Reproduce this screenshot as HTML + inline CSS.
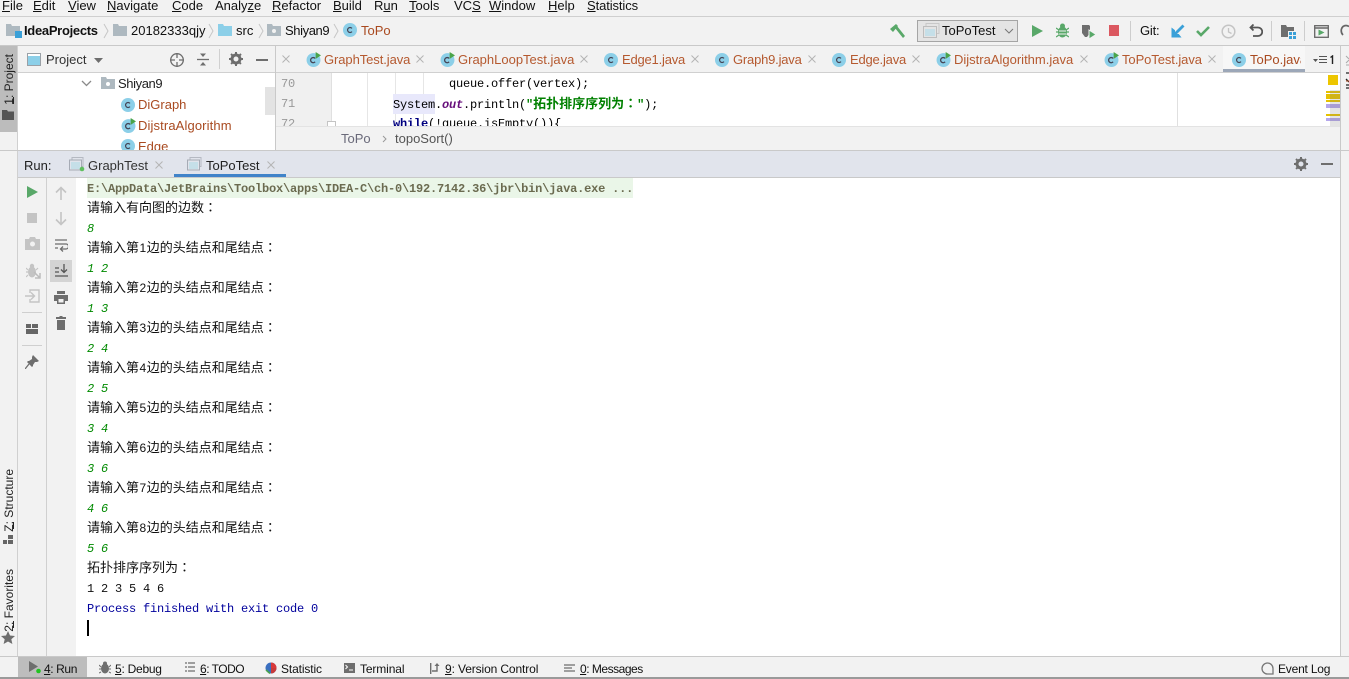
<!DOCTYPE html>
<html><head><meta charset="utf-8"><style>
html,body{margin:0;padding:0}
body{width:1349px;height:679px;overflow:hidden;position:relative;background:#f2f2f2;font-family:"Liberation Sans","Noto Sans CJK SC",sans-serif;font-size:13px;color:#111}
.a,.t,svg.i{position:absolute}
.a{display:block}
.t{white-space:nowrap;line-height:16px}
.o{color:#a94a20}
.tab{color:#b5592f}
.c{position:absolute;left:87px;white-space:nowrap;height:20px;line-height:20px;margin-top:-1px;font-family:"Noto Sans CJK SC",sans-serif;font-size:13px;color:#111}
.c b{font-family:"Liberation Sans",sans-serif;font-weight:normal;font-size:12px;padding:0 .5px}
em{font-style:normal;font-family:"Noto Sans CJK TC",sans-serif}
.g{position:absolute;left:87px;white-space:nowrap;height:20px;line-height:20px;margin-top:1px;font-family:"Liberation Mono",monospace;font-size:12px;letter-spacing:-.2px;font-style:italic;color:#008a00}
.m{font-family:"Liberation Mono","Noto Sans CJK SC",monospace;font-size:12px;letter-spacing:-.2px;line-height:20px;white-space:pre;position:absolute}
.k{margin-top:1px}
.b{font-size:12px;letter-spacing:-.12px}
.v{position:absolute;writing-mode:vertical-rl;transform:rotate(180deg);white-space:nowrap;font-size:12px;line-height:14px;color:#222}
</style></head><body>
<svg width="0" height="0" style="position:absolute"><defs>
<symbol id="ci" viewBox="0 0 14 14"><circle cx="7" cy="7" r="7" fill="#8ccfe8"/><path d="M9 5.400A2.500 2.500 0 1 0 9 8.600" fill="none" stroke="#445" stroke-width="1.200"/></symbol>
<symbol id="cr" viewBox="0 0 14 14"><circle cx="7" cy="7.500" r="6.500" fill="#8ccfe8"/><path d="M8.500 6A2.400 2.400 0 1 0 8.500 9.200" fill="none" stroke="#445" stroke-width="1.200"/><path d="M9 0l5 3.200-5 3.200z" fill="#4aa44a"/></symbol>
<symbol id="fo" viewBox="0 0 14 12"><path d="M0 0h5l1 2h8v10H0z" fill="#aeb9c0"/></symbol>
<symbol id="xx" viewBox="0 0 8 8"><path d="M.5 .5l7 7M7.500 .5l-7 7" stroke="#b4b4b4" stroke-width="1" fill="none"/></symbol>
</defs></svg>

<!-- menu -->
<div class="a" style="left:0;top:16px;width:1349px;height:1px;background:#cfcfcf"></div>
<div class="t" style="left:2px;top:-2px"><u>F</u>ile</div>
<div class="t" style="left:33px;top:-2px"><u>E</u>dit</div>
<div class="t" style="left:68px;top:-2px"><u>V</u>iew</div>
<div class="t" style="left:107px;top:-2px"><u>N</u>avigate</div>
<div class="t" style="left:172px;top:-2px"><u>C</u>ode</div>
<div class="t" style="left:215px;top:-2px">Analy<u>z</u>e</div>
<div class="t" style="left:272px;top:-2px"><u>R</u>efactor</div>
<div class="t" style="left:333px;top:-2px"><u>B</u>uild</div>
<div class="t" style="left:374px;top:-2px">R<u>u</u>n</div>
<div class="t" style="left:409px;top:-2px"><u>T</u>ools</div>
<div class="t" style="left:454px;top:-2px">VC<u>S</u></div>
<div class="t" style="left:489px;top:-2px"><u>W</u>indow</div>
<div class="t" style="left:548px;top:-2px"><u>H</u>elp</div>
<div class="t" style="left:587px;top:-2px;letter-spacing:-.1px"><u>S</u>tatistics</div>

<!-- nav -->
<div class="a" style="left:0;top:45px;width:1349px;height:1px;background:#c9c9c9"></div>
<svg class="i" style="left:6px;top:24px" width="17" height="14"><use href="#fo" width="14" height="12"/><rect x="9" y="7" width="7" height="7" fill="#3aa0d8"/></svg>
<div class="t" style="left:24px;top:23px;font-weight:bold;letter-spacing:-.3px">IdeaProjects</div>
<svg class="i" style="left:103px;top:23px" width="6" height="16"><path d="M1 1l4 7-4 7" fill="none" stroke="#c6c6c6"/></svg>
<svg class="i" style="left:113px;top:24px" width="14" height="12"><use href="#fo"/></svg>
<div class="t" style="left:131px;top:23px">20182333qjy</div>
<svg class="i" style="left:208px;top:23px" width="6" height="16"><path d="M1 1l4 7-4 7" fill="none" stroke="#c6c6c6"/></svg>
<svg class="i" style="left:218px;top:24px" width="14" height="12"><path d="M0 0h5l1 2h8v10H0z" fill="#8ccfe8"/></svg>
<div class="t" style="left:236px;top:23px">src</div>
<svg class="i" style="left:258px;top:23px" width="6" height="16"><path d="M1 1l4 7-4 7" fill="none" stroke="#c6c6c6"/></svg>
<svg class="i" style="left:267px;top:24px" width="14" height="12"><use href="#fo"/><circle cx="7" cy="7" r="2" fill="#f2f2f2"/></svg>
<div class="t" style="left:285px;top:23px;letter-spacing:-.4px">Shiyan9</div>
<svg class="i" style="left:333px;top:23px" width="6" height="16"><path d="M1 1l4 7-4 7" fill="none" stroke="#c6c6c6"/></svg>
<svg class="i" style="left:343px;top:23px" width="14" height="14"><use href="#ci"/></svg>
<div class="t o" style="left:361px;top:23px">ToPo</div>

<!-- toolbar -->
<svg class="i" style="left:889px;top:23px" width="17" height="15"><path d="M1 6L7 1l2 2-5 6zM6 5l2-2 8 10-2 2z" fill="#59a869"/></svg>
<div class="a" style="left:917px;top:20px;width:99px;height:20px;background:#e4e4e4;border:1px solid #a5a5a5"></div>
<svg class="i" style="left:923px;top:23px" width="17" height="15"><rect x="3" y="0.500" width="13" height="10" fill="none" stroke="#c8c8c8"/><rect x="0.500" y="3.500" width="13" height="11" fill="#e4e4e4" stroke="#bdbdbd"/><rect x="2" y="6" width="10" height="7" fill="#c5dfe8"/></svg>
<div class="t" style="left:942px;top:23px">ToPoTest</div>
<svg class="i" style="left:1004px;top:28px" width="10" height="6"><path d="M1 1l4 4 4-4" fill="none" stroke="#777"/></svg>
<svg class="i" style="left:1032px;top:25px" width="11" height="12"><path d="M0 0l11 6-11 6z" fill="#59a869"/></svg>
<svg class="i" style="left:1056px;top:23px" width="13" height="15"><ellipse cx="6.500" cy="9" rx="4.500" ry="5.500" fill="#59a869"/><circle cx="6.500" cy="3" r="2.500" fill="#59a869"/><path d="M0 5l3 2M13 5l-3 2M0 9h3M10 9h3M0 14l3-2M13 14l-3-2" stroke="#59a869" stroke-width="1.300"/><path d="M3 8h7M3 11h7" stroke="#f2f2f2"/></svg>
<svg class="i" style="left:1081px;top:24px" width="16" height="16"><path d="M1 1h7l1 1v7l-3 4H4L1 9z" fill="#6e6e6e"/><path d="M8 6l7 4.500-7 4.500z" fill="#59a869" stroke="#f2f2f2"/></svg>
<div class="a" style="left:1109px;top:25px;width:10px;height:11px;background:#db5860"></div>
<div class="a" style="left:1130px;top:21px;width:1px;height:20px;background:#cdcdcd"></div>
<div class="t" style="left:1140px;top:23px;letter-spacing:-.2px">Git:</div>
<svg class="i" style="left:1171px;top:24px" width="14" height="14"><path d="M12.500 1.500L4 10" fill="none" stroke="#3aa0d8" stroke-width="2.800"/><path d="M1 4.500V13h8.500l-2-2.500H3.500V6.500z" fill="#3aa0d8" stroke="#3aa0d8"/></svg>
<svg class="i" style="left:1196px;top:25px" width="15" height="12"><path d="M1 6l4 4 8-8" fill="none" stroke="#59a869" stroke-width="2.600"/></svg>
<svg class="i" style="left:1221px;top:24px" width="15" height="15"><circle cx="7.500" cy="7.500" r="6.300" fill="none" stroke="#c4c4c4" stroke-width="1.500"/><path d="M7.500 4v4l3 1.500" fill="none" stroke="#c4c4c4" stroke-width="1.300"/></svg>
<svg class="i" style="left:1249px;top:24px" width="14" height="14"><path d="M4.500 .5L1.500 3.500l3 3M1.500 3.500h7.500a3.800 3.800 0 0 1 0 8.500H4" fill="none" stroke="#555" stroke-width="1.800"/></svg>
<div class="a" style="left:1271px;top:21px;width:1px;height:20px;background:#cdcdcd"></div>
<svg class="i" style="left:1281px;top:25px" width="16" height="14"><path d="M0 0h5l1 2h7v10H0z" fill="#6e6e6e"/><path d="M7 6h9v8H7z" fill="#f2f2f2"/><path d="M8 7h3v3H8zM12 7h3v3h-3zM8 11h3v3H8zM12 11h3v3h-3z" fill="#3aa0d8"/></svg>
<div class="a" style="left:1304px;top:21px;width:1px;height:20px;background:#cdcdcd"></div>
<svg class="i" style="left:1314px;top:25px" width="15" height="13"><rect x=".7" y=".7" width="13.600" height="11.600" fill="none" stroke="#666" stroke-width="1.300"/><path d="M1 3h13" stroke="#666" stroke-width="1.500"/><path d="M4.500 4.500l6 3-6 3z" fill="#59a869"/></svg>
<svg class="i" style="left:1340px;top:24px" width="9" height="14"><path d="M9 2.500A5.500 5.500 0 0 0 3 2.500 6 6 0 0 0 3 11" fill="none" stroke="#666" stroke-width="1.700"/></svg>

<!-- left stripe -->
<div class="a" style="left:17px;top:46px;width:1px;height:610px;background:#d0d0d0"></div>
<div class="a" style="left:0;top:46px;width:17px;height:86px;background:#bcbcbc"></div>
<div class="v" style="left:2px;top:54px">1: Project</div>
<div class="a" style="left:13px;top:97px;width:1px;height:7px;background:#222"></div>
<svg class="i" style="left:2px;top:110px" width="12" height="10"><path d="M0 0h5l1 1.500h6V10H0z" fill="#555"/></svg>
<div class="v" style="left:2px;top:469px">Z: Structure</div>
<div class="a" style="left:13px;top:522px;width:1px;height:7px;background:#222"></div>
<svg class="i" style="left:3px;top:535px" width="10" height="10"><path d="M0 5h4v4H0zM5 0h5v4H5zM5 5h5v4H5z" fill="#666"/></svg>
<div class="v" style="left:2px;top:569px">2: Favorites</div>
<div class="a" style="left:13px;top:621px;width:1px;height:7px;background:#222"></div>
<svg class="i" style="left:1px;top:631px" width="14" height="13"><path d="M7 0l2 4.500 5 .5-3.700 3.200 1.100 4.800L7 10.500 2.600 13l1.100-4.800L0 5l5-.5z" fill="#6e6e6e"/></svg>

<!-- project panel -->
<div class="a" style="left:18px;top:72px;width:1322px;height:1px;background:#d0d0d0"></div>
<div class="a" style="left:275px;top:46px;width:1px;height:105px;background:#c9c9c9"></div>
<svg class="i" style="left:27px;top:53px" width="14" height="13"><rect x=".5" y=".5" width="13" height="12" fill="#fff" stroke="#9aa0a6"/><rect x="1" y="3" width="12" height="9" fill="#8ccfe8"/></svg>
<div class="t" style="left:46px;top:52px;color:#333">Project</div>
<svg class="i" style="left:94px;top:58px" width="9" height="6"><path d="M0 0h9L4.500 5z" fill="#6e6e6e"/></svg>
<svg class="i" style="left:169px;top:52px" width="16" height="16"><circle cx="8" cy="8" r="6.300" fill="none" stroke="#6e6e6e" stroke-width="1.300"/><path d="M8 1v5M8 10v5M1 8h5M10 8h5" stroke="#6e6e6e" stroke-width="1.300"/></svg>
<svg class="i" style="left:196px;top:52px" width="14" height="15"><path d="M1 7.500h12" stroke="#6e6e6e" stroke-width="1.300"/><path d="M4 1.500h6L7 5zM4 13.500h6L7 10z" fill="#6e6e6e"/></svg>
<div class="a" style="left:219px;top:49px;width:1px;height:20px;background:#d0d0d0"></div>
<svg class="i" style="left:229px;top:52px" width="14" height="14"><circle cx="7" cy="7" r="4" fill="none" stroke="#6e6e6e" stroke-width="3"/><path d="M7 0v14M0 7h14M2 2l10 10M12 2L2 12" stroke="#6e6e6e" stroke-width="2" stroke-dasharray="2.200 9.600 2.200"/></svg>
<div class="a" style="left:256px;top:59px;width:12px;height:2px;background:#6e6e6e"></div>

<div class="a" style="left:18px;top:73px;width:257px;height:78px;background:#fff;overflow:hidden">
<svg class="i" style="left:63px;top:7px" width="11" height="7"><path d="M1 1l4.500 4.500L10 1" fill="none" stroke="#8a8a8a" stroke-width="1.300"/></svg>
<svg class="i" style="left:83px;top:4px" width="14" height="12"><use href="#fo"/><circle cx="7" cy="7" r="2" fill="#fff"/></svg>
<div class="t" style="left:100px;top:3px;color:#222;letter-spacing:-.4px">Shiyan9</div>
<svg class="i" style="left:103px;top:25px" width="14" height="14"><use href="#ci"/></svg>
<div class="t o" style="left:120px;top:24px">DiGraph</div>
<svg class="i" style="left:103px;top:45px" width="15" height="15"><use href="#cr"/></svg>
<div class="t o" style="left:120px;top:45px;letter-spacing:.12px">DijstraAlgorithm</div>
<svg class="i" style="left:103px;top:66px" width="14" height="14"><use href="#ci"/></svg>
<div class="t o" style="left:120px;top:66px">Edge</div>
<div class="a" style="left:247px;top:14px;width:10px;height:28px;background:#e3e3e3"></div>
</div>

<!-- editor tabs -->
<svg class="i" style="left:282px;top:55px" width="8" height="8"><use href="#xx"/></svg>
<svg class="i" style="left:306px;top:52px" width="15" height="15"><use href="#cr"/></svg>
<div class="t tab" style="left:324px;top:52px;letter-spacing:-.08px">GraphTest.java</div><svg class="i" style="left:416px;top:55px" width="8" height="8"><use href="#xx"/></svg>
<svg class="i" style="left:440px;top:52px" width="15" height="15"><use href="#cr"/></svg>
<div class="t tab" style="left:458px;top:52px">GraphLoopTest.java</div><svg class="i" style="left:580px;top:55px" width="8" height="8"><use href="#xx"/></svg>
<svg class="i" style="left:604px;top:53px" width="14" height="14"><use href="#ci"/></svg>
<div class="t tab" style="left:622px;top:52px;letter-spacing:-.2px">Edge1.java</div><svg class="i" style="left:691px;top:55px" width="8" height="8"><use href="#xx"/></svg>
<svg class="i" style="left:715px;top:53px" width="14" height="14"><use href="#ci"/></svg>
<div class="t tab" style="left:733px;top:52px;letter-spacing:-.2px">Graph9.java</div><svg class="i" style="left:808px;top:55px" width="8" height="8"><use href="#xx"/></svg>
<svg class="i" style="left:832px;top:53px" width="14" height="14"><use href="#ci"/></svg>
<div class="t tab" style="left:850px;top:52px;letter-spacing:-.2px">Edge.java</div><svg class="i" style="left:912px;top:55px" width="8" height="8"><use href="#xx"/></svg>
<svg class="i" style="left:936px;top:52px" width="15" height="15"><use href="#cr"/></svg>
<div class="t tab" style="left:954px;top:52px">DijstraAlgorithm.java</div><svg class="i" style="left:1080px;top:55px" width="8" height="8"><use href="#xx"/></svg>
<svg class="i" style="left:1104px;top:52px" width="15" height="15"><use href="#cr"/></svg>
<div class="t tab" style="left:1122px;top:52px;letter-spacing:-.08px">ToPoTest.java</div><svg class="i" style="left:1208px;top:55px" width="8" height="8"><use href="#xx"/></svg>
<div class="a" style="left:1223px;top:46px;width:82px;height:26px;background:#f7f7f7"></div>
<div class="a" style="left:1223px;top:69px;width:82px;height:3px;background:#9ca7b8"></div>
<svg class="i" style="left:1232px;top:53px" width="14" height="14"><use href="#ci"/></svg>
<div class="t o" style="left:1250px;top:52px;width:51px;overflow:hidden">ToPo.java</div>
<svg class="i" style="left:1313px;top:55px" width="24" height="10"><path d="M0 4h5L2.500 7z" fill="#555"/><path d="M6 1.500h8M6 4.500h8M6 7.500h8" stroke="#555"/><path d="M17.500 2.500l2-1.500v8" fill="none" stroke="#222" stroke-width="1.400"/></svg>

<!-- editor -->
<div class="a" style="left:276px;top:73px;width:1065px;height:53px;background:#fff;overflow:hidden">
<div class="a" style="left:0;top:0;width:55px;height:53px;background:#f0f0f0"></div>
<div class="a" style="left:55px;top:0;width:1px;height:53px;background:#e0e0e0"></div>
<div class="a" style="left:91px;top:0;width:1px;height:53px;background:#e6e6e6"></div>
<div class="a" style="left:119px;top:0;width:1px;height:53px;background:#e6e6e6"></div>
<div class="a" style="left:147px;top:0;width:1px;height:53px;background:#e6e6e6"></div>
<div class="a" style="left:901px;top:0;width:1px;height:53px;background:#e0e0e0"></div>
<div class="m" style="left:5px;top:1px;color:#999">70</div>
<div class="m" style="left:5px;top:21px;color:#999">71</div>
<div class="m" style="left:5px;top:41px;color:#999">72</div>
<div class="a" style="left:51px;top:48px;width:7px;height:7px;background:#fff;border:1px solid #c4c4c4"></div>
<div class="m" style="left:173px;top:1px;color:#000">queue.offer(vertex);</div>
<div class="a" style="left:117px;top:21px;width:42px;height:20px;background:#e8e8fb"></div>
<div class="m" style="left:117px;top:22px;color:#000">System.<i style="color:#660e7a;font-weight:bold">out</i>.println(<b style="color:#008000">"</b><b style="color:#008000;font-size:13px;letter-spacing:0;font-family:'Noto Sans CJK SC',sans-serif;line-height:0">拓扑排序序列为<em>：</em></b><b style="color:#008000">"</b>);</div>
<div class="m" style="left:117px;top:41px;color:#000"><b style="color:#000080">while</b>(!queue.isEmpty()){</div>
</div>
<div class="a" style="left:276px;top:126px;width:1065px;height:1px;background:#e3e3e3"></div>
<div class="t" style="left:341px;top:131px;color:#6a6a7a">ToPo</div>
<svg class="i" style="left:382px;top:135px" width="5" height="8"><path d="M1 1l3 3-3 3" fill="none" stroke="#999"/></svg>
<div class="t" style="left:395px;top:131px;color:#555">topoSort()</div>

<!-- error stripe -->
<div class="a" style="left:1340px;top:46px;width:1px;height:105px;background:#c9c9c9"></div>
<div class="a" style="left:1328px;top:75px;width:10px;height:10px;background:#edc600"></div>
<div class="a" style="left:1326px;top:91px;width:14px;height:2px;background:#e6c200"></div>
<div class="a" style="left:1326px;top:94px;width:14px;height:5px;background:#e6c200"></div>
<div class="a" style="left:1326px;top:100px;width:14px;height:2px;background:#e6c200"></div>
<div class="a" style="left:1326px;top:104px;width:14px;height:4px;background:#b5a7ec"></div>
<div class="a" style="left:1326px;top:114px;width:14px;height:2px;background:#e6c200"></div>
<div class="a" style="left:1326px;top:118px;width:14px;height:3px;background:#b5a7ec"></div>
<div class="a" style="left:1330px;top:90px;width:10px;height:36px;background:rgba(120,120,120,.2)"></div>
<svg class="i" style="left:1345px;top:54px" width="4" height="38"><path d="M1 2l3 3M1 9l3-3M1 11h3" stroke="#aaa" fill="none"/><path d="M1 19h3M1 25l3 3M1 31h3M1 34h3" stroke="#222" stroke-width="1.300" fill="none"/><path d="M1 27h3" stroke="#a94a20"/></svg>

<!-- run header -->
<div class="a" style="left:0;top:150px;width:1349px;height:1px;background:#c9c9c9"></div>
<div class="a" style="left:18px;top:151px;width:1322px;height:26px;background:#e1e4ec"></div>
<div class="a" style="left:18px;top:177px;width:1322px;height:1px;background:#c9c9c9"></div>
<div class="a" style="left:1340px;top:151px;width:1px;height:505px;background:#c9c9c9"></div>
<div class="t" style="left:24px;top:158px;color:#222">Run:</div>
<svg class="i" style="left:69px;top:157px" width="16" height="15"><rect x="3" y=".5" width="11" height="9" fill="none" stroke="#b5b9c2"/><rect x=".5" y="3" width="12" height="10" fill="#e1e4ec" stroke="#a6abb5"/><rect x="2" y="5" width="9" height="7" fill="#c5dfe8"/><circle cx="13" cy="12" r="2.300" fill="#5fbf5f"/></svg>
<div class="t" style="left:88px;top:158px;color:#333">GraphTest</div>
<svg class="i" style="left:155px;top:161px" width="8" height="8"><use href="#xx"/></svg>
<div class="a" style="left:174px;top:174px;width:112px;height:3px;background:#4083c9"></div>
<svg class="i" style="left:187px;top:157px" width="15" height="15"><rect x="3" y=".5" width="11" height="9" fill="none" stroke="#b5b9c2"/><rect x=".5" y="3" width="12" height="10" fill="#e1e4ec" stroke="#a6abb5"/><rect x="2" y="5" width="9" height="7" fill="#c5dfe8"/></svg>
<div class="t" style="left:206px;top:158px;color:#222">ToPoTest</div>
<svg class="i" style="left:267px;top:161px" width="8" height="8"><use href="#xx"/></svg>
<svg class="i" style="left:1294px;top:157px" width="14" height="14"><circle cx="7" cy="7" r="4" fill="none" stroke="#6e6e6e" stroke-width="3"/><path d="M7 0v14M0 7h14M2 2l10 10M12 2L2 12" stroke="#6e6e6e" stroke-width="2" stroke-dasharray="2.200 9.600 2.200"/></svg>
<div class="a" style="left:1321px;top:163px;width:12px;height:2px;background:#6e6e6e"></div>

<!-- run tool columns -->
<div class="a" style="left:46px;top:178px;width:1px;height:478px;background:#d0d0d0"></div>
<div class="a" style="left:76px;top:178px;width:1264px;height:478px;background:#fff"></div>
<svg class="i" style="left:27px;top:186px" width="11" height="12"><path d="M0 0l11 6-11 6z" fill="#59a869"/></svg>
<div class="a" style="left:27px;top:213px;width:10px;height:10px;background:#c4c4c4"></div>
<svg class="i" style="left:25px;top:237px" width="15" height="13"><path d="M0 2h4l1-2h5l1 2h4v11H0z" fill="#c4c4c4"/><circle cx="7.500" cy="7" r="2.500" fill="#f2f2f2"/></svg>
<svg class="i" style="left:26px;top:263px" width="15" height="16"><ellipse cx="6" cy="9" rx="4" ry="5.500" fill="#c4c4c4"/><circle cx="6" cy="3" r="2.200" fill="#c4c4c4"/><path d="M0 5l2 2M12 5l-2 2M0 9h2M0 14l2-2" stroke="#c4c4c4" stroke-width="1.200"/><path d="M8 9l6 6M14 10v5H9" fill="none" stroke="#bcbcbc" stroke-width="1.500"/></svg>
<svg class="i" style="left:25px;top:289px" width="15" height="14"><path d="M5 4V1h9v12H5v-3" fill="none" stroke="#c4c4c4" stroke-width="1.400"/><path d="M0 7h9M6 3.500L9.500 7 6 10.500" fill="none" stroke="#c4c4c4" stroke-width="1.400"/></svg>
<div class="a" style="left:22px;top:312px;width:20px;height:1px;background:#cfcfcf"></div>
<svg class="i" style="left:26px;top:324px" width="12" height="10"><path d="M0 0h5v4H0zM6 0h6v4H6zM0 5h12v5H0z" fill="#666"/></svg>
<div class="a" style="left:22px;top:345px;width:20px;height:1px;background:#cfcfcf"></div>
<svg class="i" style="left:25px;top:355px" width="14" height="14"><path d="M8 0l6 6-2 1-2 0-2 3 0 1-1 1-5-5 1-1 1 0 3-2 0-2z" fill="#6e6e6e"/><path d="M4 9l-4 5" stroke="#6e6e6e" stroke-width="1.300"/></svg>

<svg class="i" style="left:55px;top:186px" width="12" height="14"><path d="M6 14V1.500M1 6.500l5-5 5 5" fill="none" stroke="#c4c4c4" stroke-width="1.600"/></svg>
<svg class="i" style="left:55px;top:212px" width="12" height="14"><path d="M6 0v12.500M1 7.500l5 5 5-5" fill="none" stroke="#c4c4c4" stroke-width="1.600"/></svg>
<svg class="i" style="left:54px;top:239px" width="14" height="13"><path d="M1 1h12M1 5h11a2.500 2.500 0 0 1 0 5H7M9 7.500L6.500 10 9 12.500M1 9h3" fill="none" stroke="#6e6e6e" stroke-width="1.300"/></svg>
<div class="a" style="left:50px;top:260px;width:22px;height:22px;background:#d4d4d4"></div>
<svg class="i" style="left:55px;top:264px" width="13" height="13"><path d="M9 0v8M6 5.500L9 8.500l3-3M0 4h4M0 8h4M0 12h13" fill="none" stroke="#555" stroke-width="1.300"/></svg>
<svg class="i" style="left:54px;top:291px" width="14" height="13"><path d="M3 0h8v3H3zM0 4h14v6h-3v3H3v-3H0z" fill="#6e6e6e"/><path d="M4.500 8h5v3.500h-5z" fill="#f2f2f2"/></svg>
<svg class="i" style="left:56px;top:316px" width="10" height="14"><path d="M3.500 0h3v1H10v2H0V1h3.500zM1 4h8v10H1z" fill="#6e6e6e"/></svg>

<!-- console -->
<div class="a" style="left:87px;top:178px;width:546px;height:20px;background:#eaf6e8"></div>
<div class="m k" style="left:87px;top:178px;color:#6b6b50;font-weight:bold">E:\AppData\JetBrains\Toolbox\apps\IDEA-C\ch-0\192.7142.36\jbr\bin\java.exe ...</div>
<div class="c" style="top:198px">请输入有向图的边数<em>：</em></div>
<div class="g" style="top:218px">8</div>
<div class="c" style="top:238px">请输入第<b>1</b>边的头结点和尾结点<em>：</em></div>
<div class="g" style="top:258px">1 2</div>
<div class="c" style="top:278px">请输入第<b>2</b>边的头结点和尾结点<em>：</em></div>
<div class="g" style="top:298px">1 3</div>
<div class="c" style="top:318px">请输入第<b>3</b>边的头结点和尾结点<em>：</em></div>
<div class="g" style="top:338px">2 4</div>
<div class="c" style="top:358px">请输入第<b>4</b>边的头结点和尾结点<em>：</em></div>
<div class="g" style="top:378px">2 5</div>
<div class="c" style="top:398px">请输入第<b>5</b>边的头结点和尾结点<em>：</em></div>
<div class="g" style="top:418px">3 4</div>
<div class="c" style="top:438px">请输入第<b>6</b>边的头结点和尾结点<em>：</em></div>
<div class="g" style="top:458px">3 6</div>
<div class="c" style="top:478px">请输入第<b>7</b>边的头结点和尾结点<em>：</em></div>
<div class="g" style="top:498px">4 6</div>
<div class="c" style="top:518px">请输入第<b>8</b>边的头结点和尾结点<em>：</em></div>
<div class="g" style="top:538px">5 6</div>
<div class="c" style="top:558px">拓扑排序序列为<em>：</em></div>
<div class="m k" style="left:87px;top:578px;color:#111">1 2 3 5 4 6</div>
<div class="m k" style="left:87px;top:598px;color:#00009c">Process finished with exit code 0</div>
<div class="a" style="left:87px;top:620px;width:2px;height:16px;background:#000"></div>

<!-- bottom bar -->
<div class="a" style="left:0;top:656px;width:1349px;height:1px;background:#c9c9c9"></div>
<div class="a" style="left:0;top:677px;width:1349px;height:2px;background:#9a9a9a"></div>
<div class="a" style="left:18px;top:657px;width:69px;height:20px;background:#bdbdbd"></div>
<svg class="i" style="left:29px;top:661px" width="14" height="13"><path d="M0 0l9 5.500L0 11z" fill="#6e6e6e"/><circle cx="9.500" cy="10" r="2.300" fill="#22c322"/></svg>
<div class="t b" style="left:44px;top:661px;letter-spacing:-.4px"><u>4</u>: Run</div>
<svg class="i" style="left:99px;top:661px" width="12" height="13"><ellipse cx="6" cy="7.500" rx="4" ry="5" fill="#6e6e6e"/><circle cx="6" cy="2.500" r="2" fill="#6e6e6e"/><path d="M0 4l2 2M12 4l-2 2M0 8h2M10 8h2M0 12l2-1M12 12l-2-1" stroke="#6e6e6e"/></svg>
<div class="t b" style="left:115px;top:661px;letter-spacing:-.25px"><u>5</u>: Debug</div>
<svg class="i" style="left:185px;top:662px" width="10" height="10"><path d="M0 1h2M3 1h7M0 5h2M3 5h7M0 9h2M3 9h7" stroke="#6e6e6e" stroke-width="1.300"/></svg>
<div class="t b" style="left:200px;top:661px;letter-spacing:-.5px"><u>6</u>: TODO</div>
<svg class="i" style="left:265px;top:662px" width="12" height="12"><circle cx="6" cy="6" r="5.500" fill="#3a6fc0"/><path d="M6 6V.5A5.500 5.500 0 0 1 11.500 6z" fill="#d83a3a"/><path d="M6 6h5.500A5.500 5.500 0 0 1 6 11.500z" fill="#c83a3a"/><path d="M1 8l4 3.500" stroke="#4aa44a" stroke-width="1.500"/></svg>
<div class="t b" style="left:281px;top:661px">Statistic</div>
<svg class="i" style="left:344px;top:663px" width="11" height="10"><rect width="11" height="10" fill="#6e6e6e"/><path d="M1.500 2l2 2-2 2M5 7h4" fill="none" stroke="#fff"/></svg>
<div class="t b" style="left:360px;top:661px">Terminal</div>
<svg class="i" style="left:430px;top:663px" width="10" height="11"><path d="M.7 0v11" stroke="#6e6e6e" stroke-width="1.400"/><path d="M2 8h5V3" fill="none" stroke="#6e6e6e" stroke-width="1.400"/><path d="M4.500 3L7 0l2.500 3z" fill="#6e6e6e"/></svg>
<div class="t b" style="left:445px;top:661px"><u>9</u>: Version Control</div>
<svg class="i" style="left:564px;top:664px" width="11" height="8"><path d="M0 1h11M0 4h8M0 7h11" stroke="#6e6e6e" stroke-width="1.300"/></svg>
<div class="t b" style="left:580px;top:661px;letter-spacing:-.48px"><u>0</u>: Messages</div>
<svg class="i" style="left:1261px;top:662px" width="13" height="13"><path d="M6.500 1A5.400 5.400 0 0 0 6.500 12H12V6.500A5.500 5.500 0 0 0 6.500 1z" fill="none" stroke="#777" stroke-width="1.300"/></svg>
<div class="t b" style="left:1278px;top:661px;letter-spacing:-.2px">Event Log</div>
</body></html>
